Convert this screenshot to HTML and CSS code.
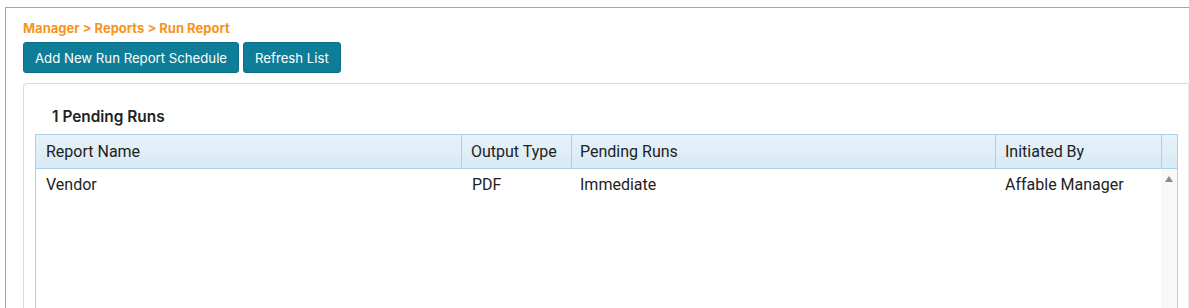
FILE: index.html
```html
<!DOCTYPE html>
<html>
<head>
<meta charset="utf-8">
<link rel="stylesheet" href="styles.css">
</head>
<body>
<div class="frame">
  <div class="crumb">Manager &gt; Reports &gt; Run Report</div>
  <div class="actions">
    <button class="btn">Add New Run Report Schedule</button>
    <button class="btn">Refresh List</button>
  </div>
  <div class="panel">
    <div class="title">1 Pending Runs</div>
    <div class="grid">
      <div class="head">
        <div class="cell c1">Report Name</div>
        <div class="cell c2">Output Type</div>
        <div class="cell c3">Pending Runs</div>
        <div class="cell c4">Initiated By</div>
        <div class="cell c5"></div>
      </div>
      <div class="body">
        <div class="rows">
          <div class="row">
            <div class="cell c1">Vendor</div>
            <div class="cell c2">PDF</div>
            <div class="cell c3">Immediate</div>
            <div class="cell c4">Affable Manager</div>
          </div>
        </div>
        <div class="scroll"><span class="arrow"></span></div>
      </div>
    </div>
  </div>
</div>
</body>
</html>
```
FILE: styles.css
```css
html, body {
  margin: 0;
  padding: 0;
  background: #ffffff;
  overflow: hidden;
}
body {
  font-family: Inter, "Liberation Sans", sans-serif;
}
.frame {
  margin: 7px 0 0 5px;
  border-left: 1px solid #8ea7cb;
  border-top: 1px solid #8ea7cb;
  padding: 13px 0 0 17px;
  height: 400px;
}
.crumb {
  color: #f7941d;
  font-weight: 700;
  font-size: 13px;
  line-height: 15px;
}
.actions {
  display: flex;
  gap: 4px;
  margin-top: 6px;
}
.btn {
  background: #0e7e98;
  color: #ffffff;
  border: 1px solid #0b6f87;
  border-radius: 3px;
  font-family: Inter, "Liberation Sans", sans-serif;
  font-size: 13.2px;
  height: 31px;
  padding: 0 11px;
  margin: 0;
}
.panel {
  margin-top: 10px;
  border: 1px solid #dcdcdc;
  border-right: 1px solid #e8e8e8;
  border-top-left-radius: 4px;
  padding: 23px 10px 0 11px;
  height: 300px;
}
.title {
  font-weight: 600;
  font-size: 15.4px;
  color: #222;
  line-height: 20px;
  padding-left: 17px;
  margin-bottom: 7px;
}
.grid {
  font-family: Roboto, "Liberation Sans", sans-serif;
  font-size: 16px;
  color: #222;
  border: 1px solid #a9d2e7;
  width: 1141px;
}
.head {
  display: grid;
  grid-template-columns: 425px 110px 424px 166px 16px;
  background: linear-gradient(#e7f2f9, #d8eaf5);
  border-bottom: 1px solid #a9d2e7;
  height: 33px;
}
.head .cell {
  border-left: 1px solid #a9d2e7;
  line-height: 33px;
  padding-left: 9px;
}
.head .c1 { border-left: none; padding-left: 10px; }
.head .c3 { padding-left: 8px; }
.body {
  display: flex;
  height: 200px;
}
.rows {
  flex: 1;
}
.row {
  display: grid;
  grid-template-columns: 425px 110px 424px 166px;
  height: 31px;
}
.row .cell {
  line-height: 31px;
  padding-left: 10px;
}
.row .c2 { padding-left: 11px; }
.row .c3 { padding-left: 9px; }
.scroll {
  width: 16px;
  background: #f8f8f8;
  position: relative;
}
.arrow {
  position: absolute;
  left: 4px;
  top: 7px;
  width: 0;
  height: 0;
  border-left: 4px solid transparent;
  border-right: 4px solid transparent;
  border-bottom: 6px solid #8a8a8a;
}
.cell {
  box-sizing: border-box;
  white-space: nowrap;
}
```
